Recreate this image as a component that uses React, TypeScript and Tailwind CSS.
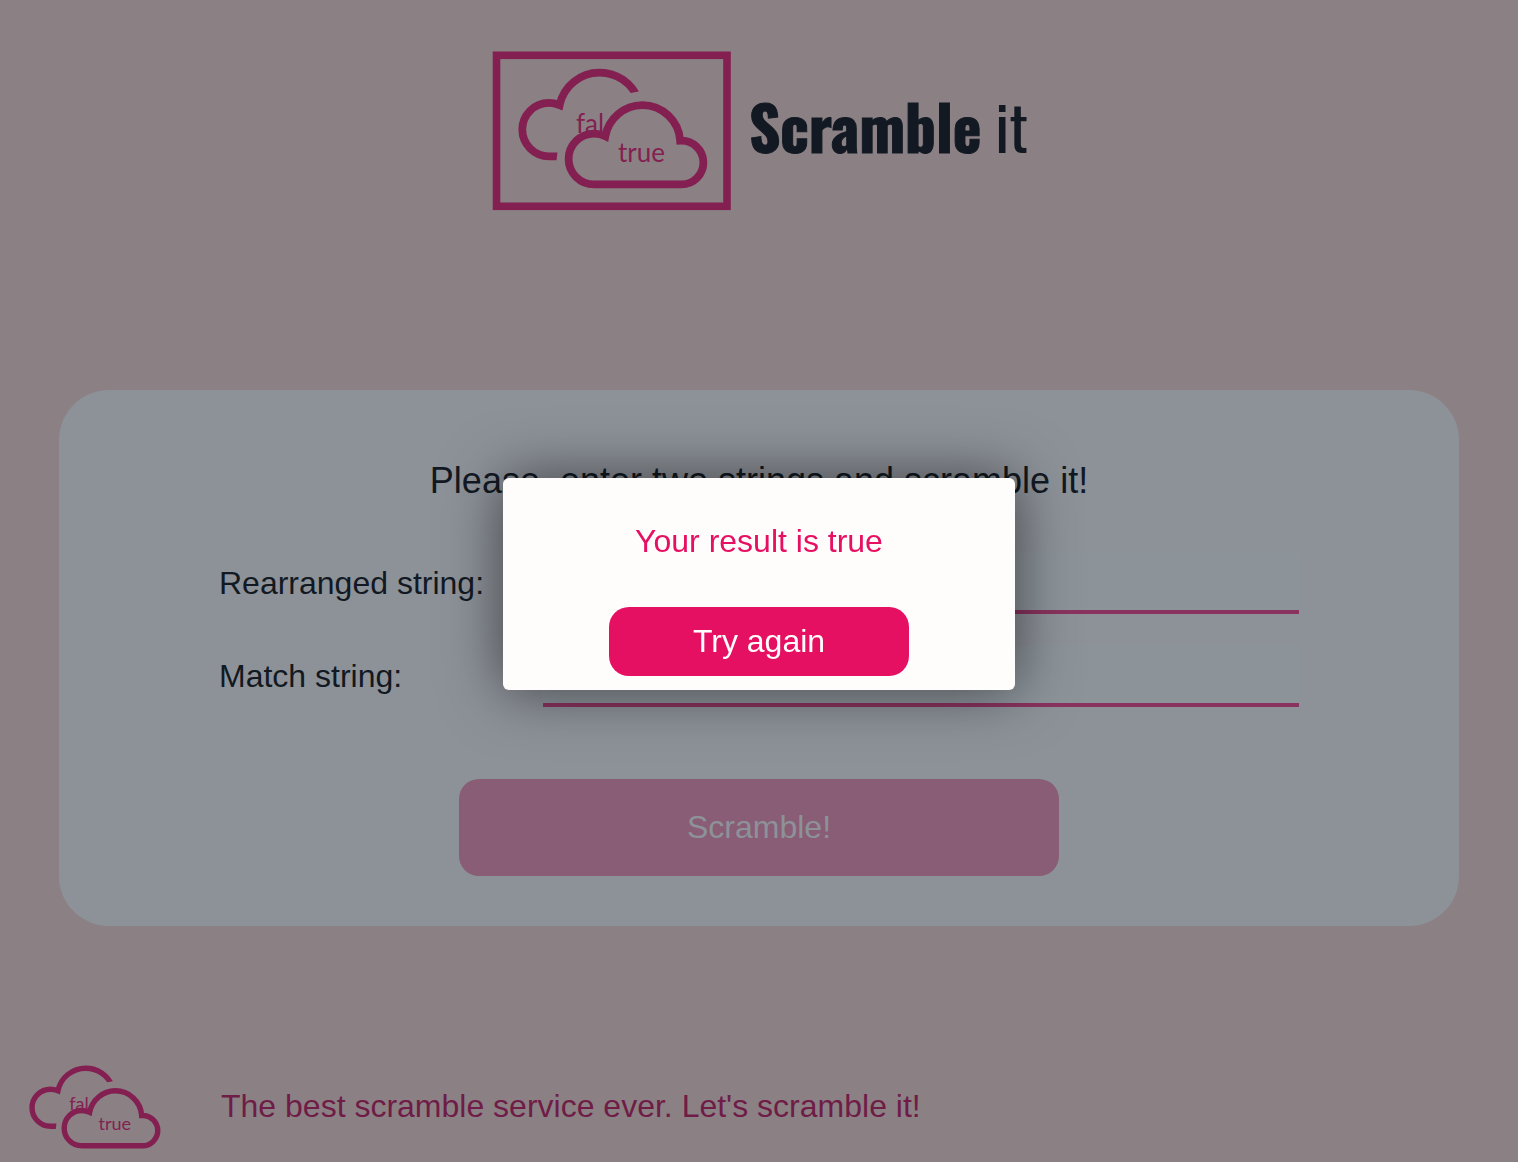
import { useId } from "react";

function Clouds() {
  const clip = useId();
  return (
    <>
      <clipPath id={clip}>
        <polygon points="500,60 650,60 650,89.5 631.7,93 600,99 570,130 561,130 557,165 500,165" />
      </clipPath>
      <path
        clipPath={`url(#${clip})`}
        d="M562 156.3H550A26.7 26.7 0 0 1 550 102.9Q555 102.9 560.6 105.1A40.8 40.8 0 0 1 600.7 72.6A40.8 40.8 0 0 1 639 99"
        fill="none"
        stroke="#831f51"
        strokeWidth="7.8"
      />
      <text x="577" y="133" fontSize="26" fill="#831f51" className="font-[family-name:Lato]">
        fal
      </text>
      <path
        d="M595 184.4A25.4 25.4 0 0 1 595 133.6Q601 133.6 606.3 136.2A38 38 0 0 1 643.3 105.2A38 38 0 0 1 681.2 140.7A21.9 21.9 0 0 1 704.4 162.5A21.9 21.9 0 0 1 682.5 184.4Z"
        fill="#8b8184"
        stroke="#831f51"
        strokeWidth="7.8"
      />
      <text x="619" y="162" fontSize="26" fill="#831f51" className="font-[family-name:Lato]">
        true
      </text>
    </>
  );
}

function Field({ id, label }: { id: string; label: string }) {
  return (
    <div className="flex items-start justify-between">
      <label htmlFor={id} className="pt-3 text-[32px] leading-9">
        {label}
      </label>
      <input
        id={id}
        type="text"
        className="h-[61px] w-[70%] border-b-4 border-[#8a335e] bg-[#8c949a] px-2 text-[32px] outline-none"
      />
    </div>
  );
}

export default function App() {
  return (
    <div className="flex min-h-screen flex-col bg-[#8b8184] font-['Liberation_Sans',Arial,sans-serif] text-[#121922]">
      <header className="flex items-center justify-center gap-[18px] pt-[51px] pl-0.5">
        <svg viewBox="493 51 239 160" className="h-40 w-[239px]" role="img" aria-label="Scramble it logo">
          <rect x="497.5" y="55.3" width="230.5" height="151" fill="none" stroke="#831f51" strokeWidth="7.6" />
          <Clouds />
        </svg>
        <h1 className="pb-3 font-[Oswald,'Roboto_Condensed',Roboto,sans-serif] text-[61px] leading-none">
          <span className="font-bold [-webkit-text-stroke:1px_#121922]">Scramble</span> it
        </h1>
      </header>

      <main className="mx-auto mt-[179px] w-[calc(100%-118px)] rounded-[50px] bg-[#8d9299] px-40 pt-[71px] pb-[50px]">
        <h2 className="text-center text-[36px] leading-10">Please, enter two strings and scramble it!</h2>
        <form className="mt-[52px] flex flex-col gap-8" onSubmit={(e) => e.preventDefault()}>
          <Field id="rearranged" label="Rearranged string:" />
          <Field id="match" label="Match string:" />
          <button
            type="submit"
            disabled
            className="mx-auto mt-10 h-[97px] w-[600px] max-w-full rounded-[20px] bg-[#895d75] pb-0.5 text-[32px] text-[#8d9299]"
          >
            Scramble!
          </button>
        </form>
      </main>

      <footer className="mt-auto flex items-center gap-[60px] px-[29px] pb-[13px]">
        <svg viewBox="519 68 190 121" className="h-[84px] w-[132px]" role="img" aria-label="Scramble it clouds">
          <Clouds />
        </svg>
        <p className="pb-0.5 text-[32px] leading-9 text-[#6f1c47]">
          The best scramble service ever. Let's scramble it!
        </p>
      </footer>

      <div className="fixed inset-0 flex items-center justify-center">
        <div
          role="dialog"
          aria-modal="true"
          aria-labelledby="result"
          className="mt-1.5 flex w-[512px] flex-col items-center rounded-md bg-[#fffdfc] pt-[45px] pb-3.5 shadow-[0_0_60px_rgba(0,0,0,0.55)]"
        >
          <p id="result" className="text-[32px] leading-9 text-[#e61062]">
            Your result is true
          </p>
          <button
            type="button"
            className="mt-12 h-[69px] w-[300px] rounded-[20px] bg-[#e61062] pb-0.5 text-[32px] text-[#fffdfc]"
          >
            Try again
          </button>
        </div>
      </div>
    </div>
  );
}
